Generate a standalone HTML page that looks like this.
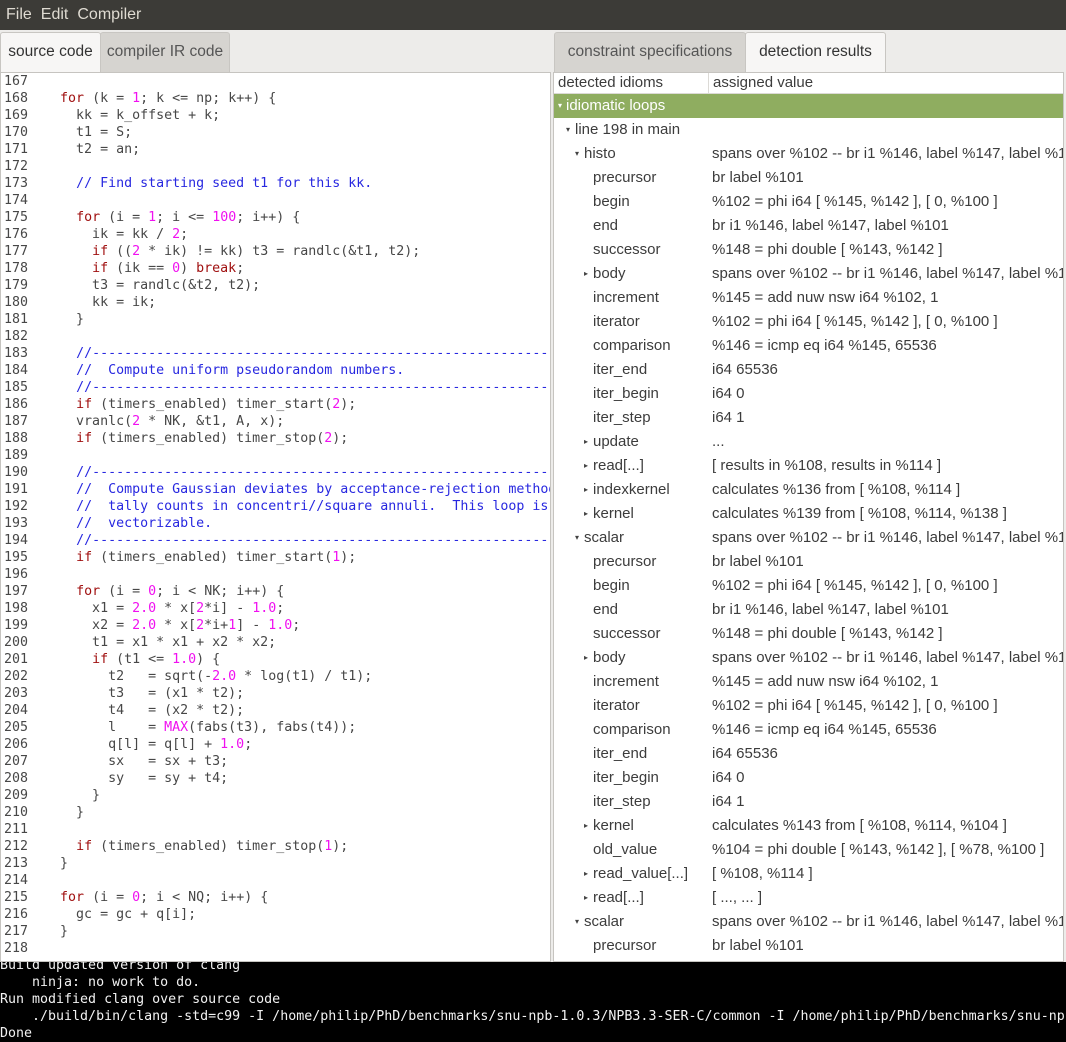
<!DOCTYPE html>
<html><head><meta charset="utf-8"><style>
*{margin:0;padding:0;box-sizing:border-box}
body{width:1066px;height:1042px;overflow:hidden;background:#edecea;font-family:"Liberation Sans",sans-serif;position:relative}
#menu{position:absolute;left:0;top:0;width:1066px;height:30px;background:#3c3b37;color:#dfdbd2;font-size:16px;line-height:30px;padding-left:6px}
#menu span{margin-right:9px}
.tab{position:absolute;top:32px;height:40px;line-height:38px;font-size:15.5px;color:#4a4a4a;text-align:center;border:1px solid #c8c6c2;border-bottom:none;border-radius:3px 3px 0 0}
.tab.on{background:#f7f6f5;color:#333}
.tab.off{background:#d6d4d0;color:#555}
#code{position:absolute;left:0;top:72px;width:551px;height:890px;background:#fff;border:1px solid #c6c4c0;overflow:hidden}
#code pre{font-family:"DejaVu Sans Mono","Liberation Mono",monospace;font-size:13.3px;line-height:17px;color:#474747;position:absolute;left:3px;top:-0.5px;white-space:pre}
.k{color:#a01010}.n{color:#f010f0}.c{color:#2828e0}
#tree{position:absolute;left:553px;top:72px;width:511px;height:890px;background:#fff;border:1px solid #c6c4c0;overflow:hidden;font-size:15px;color:#3c3c3c}
#hdr{position:absolute;left:0;top:0;width:100%;height:21px;border-bottom:1px solid #dcdad6;line-height:20px}
#hdr div{position:absolute;top:0}
.row{position:absolute;left:0;width:100%;height:24px;line-height:24px;white-space:nowrap}
.row .a{position:absolute}
.row .v{position:absolute;left:158px}
.tri{position:absolute;font-size:8px;color:#444}
#term{position:absolute;left:0;top:962px;width:1066px;height:80px;background:#000;overflow:hidden}
#term pre{font-family:"DejaVu Sans Mono","Liberation Mono",monospace;font-size:13.3px;line-height:17px;color:#f2f2f2;margin-top:-5.5px;white-space:pre}
</style></head><body>
<div id="menu"><span>File</span><span>Edit</span><span>Compiler</span></div>
<div class="tab on" style="left:0;width:101px">source code</div>
<div class="tab off" style="left:100px;width:130px">compiler IR code</div>
<div class="tab off" style="left:554px;width:192px">constraint specifications</div>
<div class="tab on" style="left:745px;width:141px">detection results</div>
<div id="code"><pre>167
168    <span class="k">for</span> (k = <span class="n">1</span>; k &lt;= np; k++) {
169      kk = k_offset + k;
170      t1 = S;
171      t2 = an;
172
173      <span class="c">// Find starting seed t1 for this kk.</span>
174
175      <span class="k">for</span> (i = <span class="n">1</span>; i &lt;= <span class="n">100</span>; i++) {
176        ik = kk / <span class="n">2</span>;
177        <span class="k">if</span> ((<span class="n">2</span> * ik) != kk) t3 = randlc(&amp;t1, t2);
178        <span class="k">if</span> (ik == <span class="n">0</span>) <span class="k">break</span>;
179        t3 = randlc(&amp;t2, t2);
180        kk = ik;
181      }
182
183      <span class="c">//------------------------------------------------------------</span>
184      <span class="c">//  Compute uniform pseudorandom numbers.</span>
185      <span class="c">//------------------------------------------------------------</span>
186      <span class="k">if</span> (timers_enabled) timer_start(<span class="n">2</span>);
187      vranlc(<span class="n">2</span> * NK, &amp;t1, A, x);
188      <span class="k">if</span> (timers_enabled) timer_stop(<span class="n">2</span>);
189
190      <span class="c">//------------------------------------------------------------</span>
191      <span class="c">//  Compute Gaussian deviates by acceptance-rejection method,</span>
192      <span class="c">//  tally counts in concentri//square annuli.  This loop is not</span>
193      <span class="c">//  vectorizable.</span>
194      <span class="c">//------------------------------------------------------------</span>
195      <span class="k">if</span> (timers_enabled) timer_start(<span class="n">1</span>);
196
197      <span class="k">for</span> (i = <span class="n">0</span>; i &lt; NK; i++) {
198        x1 = <span class="n">2.0</span> * x[<span class="n">2</span>*i] - <span class="n">1.0</span>;
199        x2 = <span class="n">2.0</span> * x[<span class="n">2</span>*i+<span class="n">1</span>] - <span class="n">1.0</span>;
200        t1 = x1 * x1 + x2 * x2;
201        <span class="k">if</span> (t1 &lt;= <span class="n">1.0</span>) {
202          t2   = sqrt(-<span class="n">2.0</span> * log(t1) / t1);
203          t3   = (x1 * t2);
204          t4   = (x2 * t2);
205          l    = <span class="n">MAX</span>(fabs(t3), fabs(t4));
206          q[l] = q[l] + <span class="n">1.0</span>;
207          sx   = sx + t3;
208          sy   = sy + t4;
209        }
210      }
211
212      <span class="k">if</span> (timers_enabled) timer_stop(<span class="n">1</span>);
213    }
214
215    <span class="k">for</span> (i = <span class="n">0</span>; i &lt; NQ; i++) {
216      gc = gc + q[i];
217    }
218
</pre></div>
<div id="tree">
<div id="hdr"><div style="left:4px">detected idioms</div><div style="left:154px;border-left:1px solid #dcdad6;padding-left:4px;height:21px">assigned value</div></div>
<div class="row" style="top:21px;background:#8fad60;color:#fff"><span class="tri" style="left:4px;color:#fff">▾</span><span class="a" style="left:12px">idiomatic loops</span></div>
<div class="row" style="top:45px"><span class="tri" style="left:12px">▾</span><span class="a" style="left:21px">line 198 in main</span></div>
<div class="row" style="top:69px"><span class="tri" style="left:21px">▾</span><span class="a" style="left:30px">histo</span><span class="v">spans over %102 -- br i1 %146, label %147, label %101</span></div>
<div class="row" style="top:93px"><span class="a" style="left:39px">precursor</span><span class="v">br label %101</span></div>
<div class="row" style="top:117px"><span class="a" style="left:39px">begin</span><span class="v">%102 = phi i64 [ %145, %142 ], [ 0, %100 ]</span></div>
<div class="row" style="top:141px"><span class="a" style="left:39px">end</span><span class="v">br i1 %146, label %147, label %101</span></div>
<div class="row" style="top:165px"><span class="a" style="left:39px">successor</span><span class="v">%148 = phi double [ %143, %142 ]</span></div>
<div class="row" style="top:189px"><span class="tri" style="left:30px">▸</span><span class="a" style="left:39px">body</span><span class="v">spans over %102 -- br i1 %146, label %147, label %101</span></div>
<div class="row" style="top:213px"><span class="a" style="left:39px">increment</span><span class="v">%145 = add nuw nsw i64 %102, 1</span></div>
<div class="row" style="top:237px"><span class="a" style="left:39px">iterator</span><span class="v">%102 = phi i64 [ %145, %142 ], [ 0, %100 ]</span></div>
<div class="row" style="top:261px"><span class="a" style="left:39px">comparison</span><span class="v">%146 = icmp eq i64 %145, 65536</span></div>
<div class="row" style="top:285px"><span class="a" style="left:39px">iter_end</span><span class="v">i64 65536</span></div>
<div class="row" style="top:309px"><span class="a" style="left:39px">iter_begin</span><span class="v">i64 0</span></div>
<div class="row" style="top:333px"><span class="a" style="left:39px">iter_step</span><span class="v">i64 1</span></div>
<div class="row" style="top:357px"><span class="tri" style="left:30px">▸</span><span class="a" style="left:39px">update</span><span class="v">...</span></div>
<div class="row" style="top:381px"><span class="tri" style="left:30px">▸</span><span class="a" style="left:39px">read[...]</span><span class="v">[ results in %108, results in %114 ]</span></div>
<div class="row" style="top:405px"><span class="tri" style="left:30px">▸</span><span class="a" style="left:39px">indexkernel</span><span class="v">calculates %136 from [ %108, %114 ]</span></div>
<div class="row" style="top:429px"><span class="tri" style="left:30px">▸</span><span class="a" style="left:39px">kernel</span><span class="v">calculates %139 from [ %108, %114, %138 ]</span></div>
<div class="row" style="top:453px"><span class="tri" style="left:21px">▾</span><span class="a" style="left:30px">scalar</span><span class="v">spans over %102 -- br i1 %146, label %147, label %101</span></div>
<div class="row" style="top:477px"><span class="a" style="left:39px">precursor</span><span class="v">br label %101</span></div>
<div class="row" style="top:501px"><span class="a" style="left:39px">begin</span><span class="v">%102 = phi i64 [ %145, %142 ], [ 0, %100 ]</span></div>
<div class="row" style="top:525px"><span class="a" style="left:39px">end</span><span class="v">br i1 %146, label %147, label %101</span></div>
<div class="row" style="top:549px"><span class="a" style="left:39px">successor</span><span class="v">%148 = phi double [ %143, %142 ]</span></div>
<div class="row" style="top:573px"><span class="tri" style="left:30px">▸</span><span class="a" style="left:39px">body</span><span class="v">spans over %102 -- br i1 %146, label %147, label %101</span></div>
<div class="row" style="top:597px"><span class="a" style="left:39px">increment</span><span class="v">%145 = add nuw nsw i64 %102, 1</span></div>
<div class="row" style="top:621px"><span class="a" style="left:39px">iterator</span><span class="v">%102 = phi i64 [ %145, %142 ], [ 0, %100 ]</span></div>
<div class="row" style="top:645px"><span class="a" style="left:39px">comparison</span><span class="v">%146 = icmp eq i64 %145, 65536</span></div>
<div class="row" style="top:669px"><span class="a" style="left:39px">iter_end</span><span class="v">i64 65536</span></div>
<div class="row" style="top:693px"><span class="a" style="left:39px">iter_begin</span><span class="v">i64 0</span></div>
<div class="row" style="top:717px"><span class="a" style="left:39px">iter_step</span><span class="v">i64 1</span></div>
<div class="row" style="top:741px"><span class="tri" style="left:30px">▸</span><span class="a" style="left:39px">kernel</span><span class="v">calculates %143 from [ %108, %114, %104 ]</span></div>
<div class="row" style="top:765px"><span class="a" style="left:39px">old_value</span><span class="v">%104 = phi double [ %143, %142 ], [ %78, %100 ]</span></div>
<div class="row" style="top:789px"><span class="tri" style="left:30px">▸</span><span class="a" style="left:39px">read_value[...]</span><span class="v">[ %108, %114 ]</span></div>
<div class="row" style="top:813px"><span class="tri" style="left:30px">▸</span><span class="a" style="left:39px">read[...]</span><span class="v">[ ..., ... ]</span></div>
<div class="row" style="top:837px"><span class="tri" style="left:21px">▾</span><span class="a" style="left:30px">scalar</span><span class="v">spans over %102 -- br i1 %146, label %147, label %101</span></div>
<div class="row" style="top:861px"><span class="a" style="left:39px">precursor</span><span class="v">br label %101</span></div>
</div>
<div id="term"><pre>Build updated version of clang
    ninja: no work to do.
Run modified clang over source code
    ./build/bin/clang -std=c99 -I /home/philip/PhD/benchmarks/snu-npb-1.0.3/NPB3.3-SER-C/common -I /home/philip/PhD/benchmarks/snu-npb
Done</pre></div>
</body></html>
